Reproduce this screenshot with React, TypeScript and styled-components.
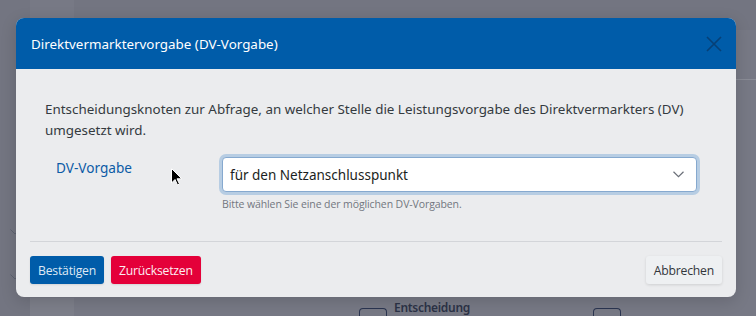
import React from "react";
import styled, { createGlobalStyle } from "styled-components";

const Global = createGlobalStyle`
  html, body { margin: 0; padding: 0; }
  body { width: 756px; height: 316px; overflow: hidden; font-family: "Noto Sans", "Open Sans", sans-serif; }
`;

const Page = styled.div`
  position: relative;
  width: 756px;
  height: 316px;
  overflow: hidden;
  background: #777985;
  display: grid;
  grid-template-columns: 30px 44px 1fr;
`;

const SideRail = styled.div`
  background: #737581;
  display: flex;
  flex-direction: column;
  align-items: center;
  padding-top: 229px;
  gap: 39px;
`;

const SideCol = styled.div`
  background: #7d7f8a;
  margin-top: 298px;
`;

const MainArea = styled.div`
  display: flex;
  flex-direction: column;
`;

const TopBand = styled.div`
  height: 30px;
  background: #737581;
`;

const BandLine = styled.div`
  height: 1px;
  margin-top: 49px;
  background: #8a8c96;
  margin-left: 620px;
`;

const NodeRow = styled.div`
  margin-top: auto;
  height: 18px;
  display: flex;
  align-items: flex-start;
  padding-left: 285px;
`;

const NodeBox = styled.div<{ $w: number; $ml: number }>`
  width: ${(p) => p.$w}px;
  height: 12px;
  margin-left: ${(p) => p.$ml}px;
  margin-top: 10px;
  border: 1.5px solid #2b3550;
  border-bottom: none;
  border-radius: 4px 4px 0 0;
`;

const NodeLabel = styled.span`
  font-size: 12px;
  font-weight: 600;
  color: #2c3347;
  margin-left: 7px;
  margin-top: 1px;
  letter-spacing: -0.3px;
`;

const Overlay = styled.div`
  position: absolute;
  inset: 0;
  padding: 18px 20px 0 16px;
`;

const Modal = styled.div`
  width: 720px;
  background: #ebecee;
  border-radius: 8px;
  overflow: hidden;
  box-shadow: 0 4px 16px rgba(0, 0, 0, 0.15);
`;

const Header = styled.div`
  height: 51px;
  background: #005ca9;
  display: flex;
  align-items: center;
  justify-content: space-between;
  padding: 0 14px 0 15px;
`;

const Title = styled.h5`
  margin: 0;
  font-size: 13.4px;
  font-weight: 400;
  color: #ffffff;
`;

const Close = styled.button`
  border: 0;
  background: none;
  padding: 0;
  width: 16px;
  height: 16px;
  display: flex;
  opacity: 0.55;
`;

const Body = styled.div`
  padding: 30px 14px 0 29px;
  height: 172px;
  box-sizing: border-box;
`;

const Intro = styled.p`
  margin: 0 0 14px 0;
  font-size: 13.4px;
  line-height: 21px;
  color: #343a40;
`;

const FieldRow = styled.div`
  display: grid;
  grid-template-columns: 174px 1fr;
  padding-left: 1px;
`;

const Label = styled.label`
  font-size: 13.6px;
  color: #0c5ba6;
  padding-left: 10px;
  padding-top: 3px;
`;

const FieldCol = styled.div`
  display: flex;
  flex-direction: column;
  width: 479px;
`;

const SelectBox = styled.div`
  height: 33px;
  border: 1px solid #86a9cf;
  border-radius: 4px;
  background: #ffffff;
  box-shadow: 0 0 0 3px #b7cde3;
  display: flex;
  align-items: center;
  justify-content: space-between;
  padding: 0 12px 0 7px;
  margin: 2px 2px 0 2px;
`;

const SelectText = styled.span`
  font-size: 13.5px;
  color: #1b1e21;
`;

const Help = styled.small`
  font-family: "Open Sans", sans-serif;
  font-size: 10.5px;
  color: #727780;
  margin-top: 5px;
  padding-left: 2px;
  letter-spacing: -0.1px;
`;

const Divider = styled.hr`
  margin: 0 14px;
  border: 0;
  border-top: 1px solid #d3d5d9;
`;

const Footer = styled.div`
  display: flex;
  gap: 7px;
  padding: 14px 14px 13px 14px;
`;

const Btn = styled.button<{ $variant: "primary" | "danger" | "light" }>`
  height: 28px;
  border: 0;
  border-radius: 3px;
  padding: 0 8px;
  font-family: "Open Sans", sans-serif;
  font-size: 12.2px;
  letter-spacing: -0.2px;
  background: ${(p) =>
    p.$variant === "primary" ? "#005ca9" : p.$variant === "danger" ? "#e40039" : "#eef0f2"};
  color: ${(p) => (p.$variant === "light" ? "#33363b" : p.$variant === "primary" ? "#dfe9f5" : "#fdeef2")};
  box-shadow: ${(p) => (p.$variant === "light" ? "0 1px 3px rgba(0,0,0,0.12)" : "0 1px 2px rgba(0,0,0,0.1)")};
  ${(p) => (p.$variant === "light" ? "margin-left: auto;" : "")}
`;

const Cursor = styled.svg`
  position: absolute;
  left: 171px;
  top: 168px;
`;

const Chev = () => (
  <svg width="10" height="6" viewBox="0 0 10 6" fill="none">
    <path d="M0.5 0.5 L5 5 L9.5 0.5" stroke="#5d6270" strokeWidth="1" />
  </svg>
);

export default function App() {
  return (
    <>
      <Global />
      <Page>
        <SideRail>
          <Chev />
          <Chev />
        </SideRail>
        <SideCol />
        <MainArea>
          <TopBand />
          <BandLine />
          <NodeRow>
            <NodeBox $w={26} $ml={0} />
            <NodeLabel>Entscheidung</NodeLabel>
            <NodeBox $w={26} $ml={123} />
          </NodeRow>
        </MainArea>
        <Overlay>
          <Modal>
            <Header>
              <Title>Direktvermarktervorgabe (DV-Vorgabe)</Title>
              <Close aria-label="Schließen">
                <svg width="16" height="16" viewBox="0 0 16 16">
                  <path d="M1 1 L15 15 M15 1 L1 15" stroke="#0d2a4d" strokeWidth="1.6" />
                </svg>
              </Close>
            </Header>
            <Body>
              <Intro>
                Entscheidungsknoten zur Abfrage, an welcher Stelle die Leistungsvorgabe des Direktvermarkters (DV)
                umgesetzt wird.
              </Intro>
              <FieldRow>
                <Label>DV-Vorgabe</Label>
                <FieldCol>
                  <SelectBox>
                    <SelectText>für den Netzanschlusspunkt</SelectText>
                    <svg width="11" height="7" viewBox="0 0 11 7" fill="none">
                      <path d="M0.5 0.8 L5.5 5.6 L10.5 0.8" stroke="#6a6f78" strokeWidth="1.2" />
                    </svg>
                  </SelectBox>
                  <Help>Bitte wählen Sie eine der möglichen DV-Vorgaben.</Help>
                </FieldCol>
              </FieldRow>
            </Body>
            <Divider />
            <Footer>
              <Btn $variant="primary">Bestätigen</Btn>
              <Btn $variant="danger">Zurücksetzen</Btn>
              <Btn $variant="light">Abbrechen</Btn>
            </Footer>
          </Modal>
        </Overlay>
        <Cursor width="12" height="19" viewBox="0 0 12 19">
          <path d="M0.5 0.5 L0.5 15 L4 11.5 L6.5 17 L8.5 16 L6 10.8 L10.8 10.8 Z" fill="#000" stroke="#fff" strokeWidth="1" />
        </Cursor>
      </Page>
    </>
  );
}
